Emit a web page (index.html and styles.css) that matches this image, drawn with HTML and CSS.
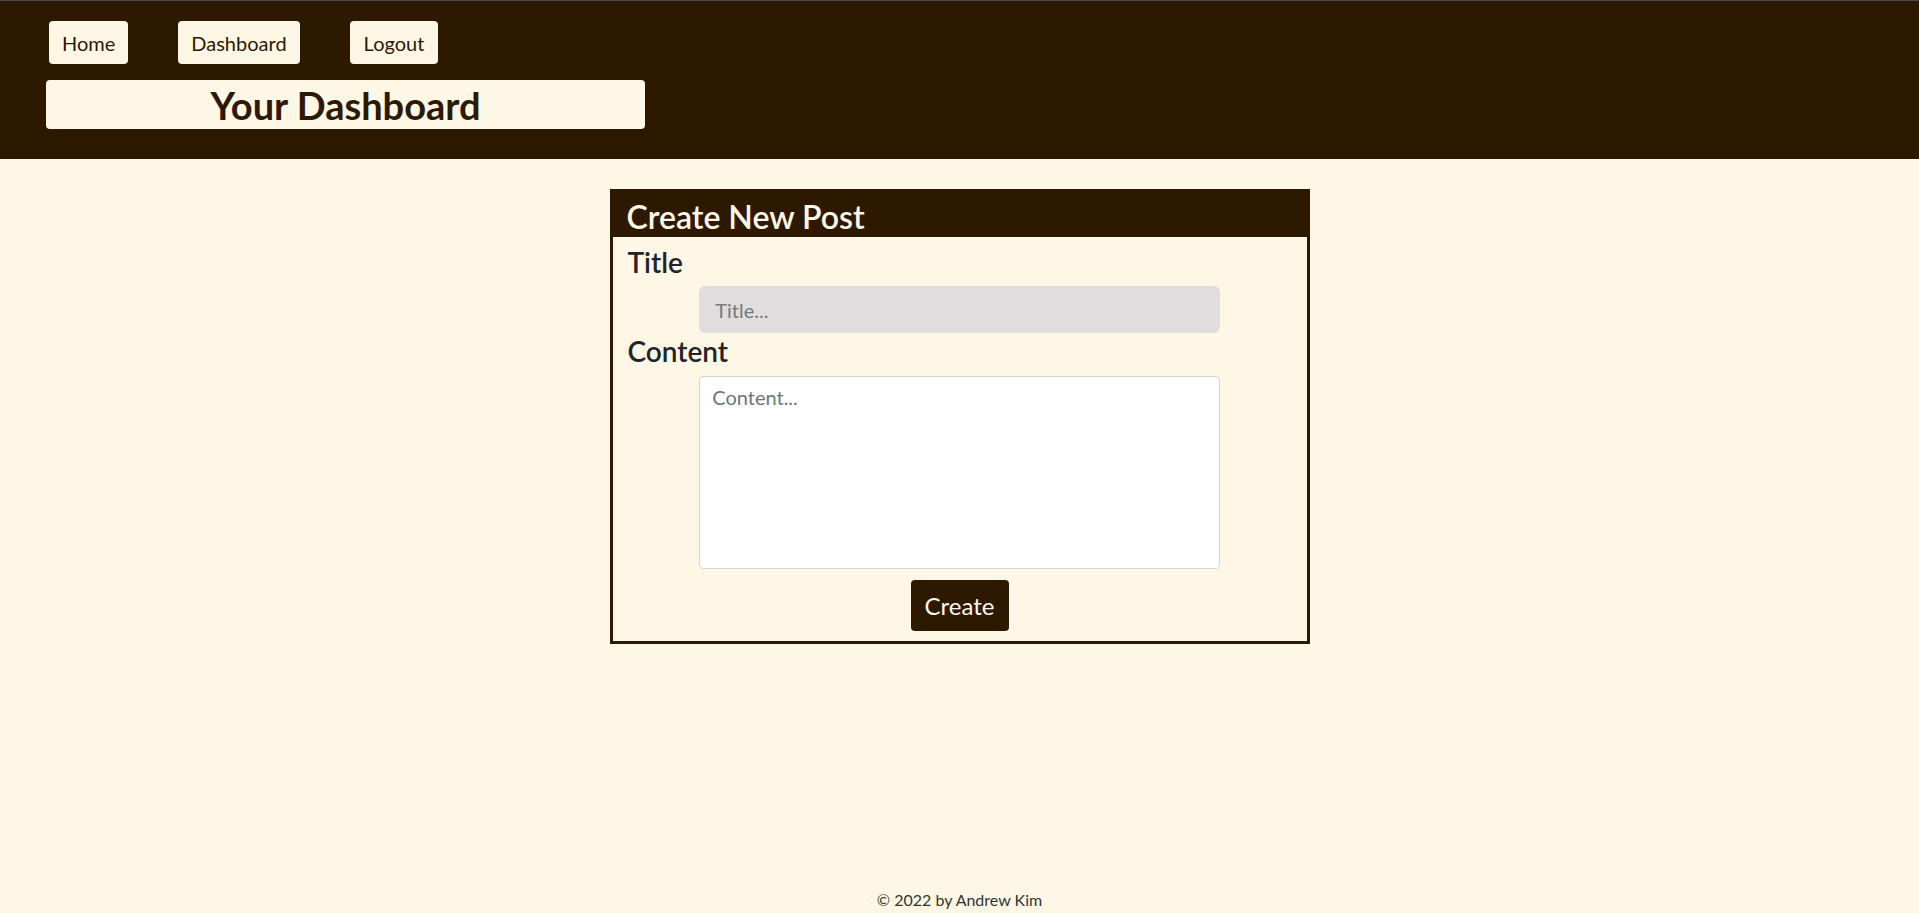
FILE: index.html
```html
<!DOCTYPE html>
<html lang="en">
<head>
<meta charset="utf-8">
<title>Your Dashboard</title>
<link rel="stylesheet" href="styles.css">
</head>
<body>
<div class="page">
  <header class="site-header">
    <nav class="nav">
      <a class="nav-btn" href="#">Home</a>
      <a class="nav-btn" href="#">Dashboard</a>
      <a class="nav-btn nav-btn-wide" href="#">Logout</a>
    </nav>
    <div class="title-box">
      <h1 class="page-title">Your Dashboard</h1>
    </div>
  </header>

  <main class="main">
    <section class="card">
      <h2 class="card-header">Create New Post</h2>
      <form class="card-body">
        <label class="field-label" for="title">Title</label>
        <input class="title-input" id="title" type="text" placeholder="Title...">
        <label class="field-label content-label" for="content">Content</label>
        <textarea class="content-input" id="content" placeholder="Content..."></textarea>
        <button class="create-btn" type="button">Create</button>
      </form>
    </section>
  </main>

  <footer class="footer">© 2022 by Andrew Kim</footer>
</div>
</body>
</html>
```

FILE: styles.css
```css
* {
  box-sizing: border-box;
}

html, body {
  margin: 0;
  padding: 0;
}

body {
  background: #fff7e6;
  font-family: Lato, "Open Sans", sans-serif;
  color: #212529;
}

.page {
  min-height: 100vh;
  display: flex;
  flex-direction: column;
}

.site-header {
  background: #2c1900;
  border-top: 1px solid #4a4a4a;
  padding: 20px 0 30px 46px;
  display: flex;
  flex-direction: column;
  align-items: flex-start;
  gap: 16px;
}

.nav {
  display: flex;
  gap: 50px;
  padding-left: 3px;
}

.nav-btn {
  display: flex;
  align-items: center;
  height: 43px;
  padding: 0 13px;
  background: #fff7e6;
  border-radius: 4px;
  color: #2c1900;
  font-size: 20px;
  text-decoration: none;
}

.nav-btn-wide {
  padding: 0 14px;
}

.title-box {
  width: 599px;
  height: 49px;
  background: #fff7e6;
  border-radius: 4px;
  display: flex;
  align-items: center;
  justify-content: center;
}

.page-title {
  margin: 0;
  font-size: 38px;
  font-weight: 700;
  color: #2c1900;
  line-height: 1;
}

.main {
  display: flex;
  justify-content: center;
  padding-top: 30px;
}

.card {
  width: 700px;
  border: 3px solid #2c1900;
}

.card-header {
  margin: 0;
  height: 45px;
  background: #2c1900;
  color: #fff7e6;
  font-size: 32px;
  font-weight: 600;
  line-height: 40px;
  padding: 5px 0 0 14px;
}

.card-body {
  display: flex;
  flex-direction: column;
  align-items: center;
  padding: 8px 0 10px;
}

.field-label {
  align-self: flex-start;
  margin-left: 15px;
  font-size: 28px;
  font-weight: 600;
  line-height: 34px;
}

.title-input {
  width: 75%;
  height: 47px;
  margin-top: 7px;
  border: none;
  border-radius: 6px;
  background: #dfdddd;
  padding: 0 16px;
  font-family: inherit;
  font-size: 20px;
  color: #212529;
}

.title-input::placeholder {
  color: #7a7878;
}

.content-label {
  margin-top: 1px;
}

.content-input {
  width: 75%;
  height: 193px;
  margin-top: 8px;
  border: 1px solid #ced4da;
  border-radius: 4px;
  background: #fff;
  padding: 8px 12px;
  font-family: inherit;
  font-size: 20px;
  resize: none;
}

.content-input::placeholder {
  color: #6c757d;
}

.create-btn {
  margin-top: 11px;
  height: 51px;
  width: 98px;
  border: none;
  border-radius: 4px;
  background: #2c1900;
  color: #fff7e6;
  font-family: inherit;
  font-size: 24px;
}

.footer {
  margin-top: auto;
  text-align: center;
  font-size: 16px;
  color: #333;
  padding-bottom: 4px;
}
```
